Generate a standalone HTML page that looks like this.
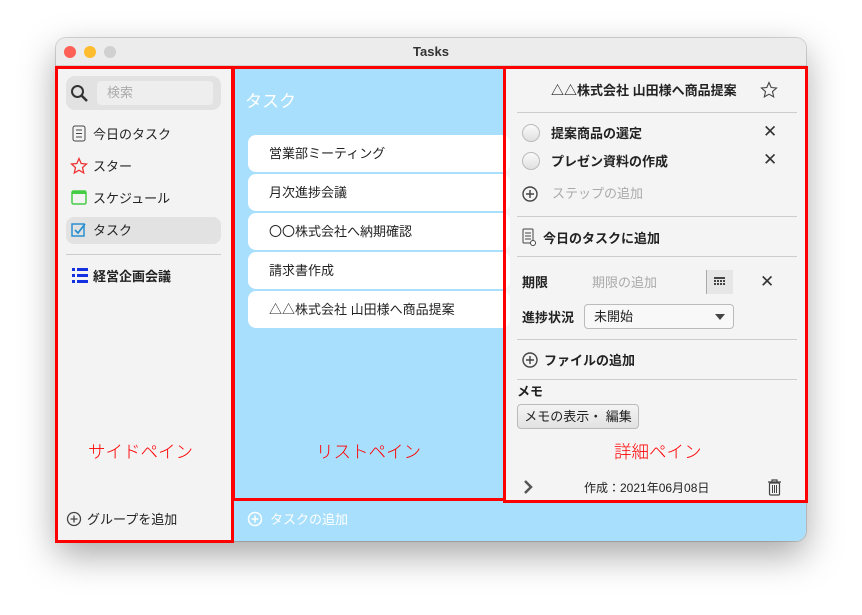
<!DOCTYPE html>
<html><head><meta charset="utf-8"><style>
*{margin:0;padding:0;box-sizing:border-box}
body{width:862px;height:615px;background:#fff;font-family:"Liberation Sans","Noto Sans CJK JP",sans-serif;position:relative;overflow:hidden;font-size:13px;color:#222}
.a{position:absolute}
.win{left:56px;top:38px;width:750px;height:503px;border-radius:10px;overflow:hidden;box-shadow:0 14px 36px rgba(0,0,0,.35),0 0 0 1px rgba(0,0,0,.15);background:#f4f4f4}
.rb{border:3px solid #f00}
.hr{height:1px;background:#ccc}
.item{left:248px;width:262px;height:37px;background:#fff;border-radius:8px;padding-left:21px;line-height:37px;font-size:13px;color:#222}
.circ{width:18px;height:18px;border-radius:50%;border:1px solid #bbb;background:linear-gradient(#fafafa,#e0e0e0)}
.x{font-size:17px;color:#333}
.lab{color:#f00;font-size:17.5px;font-weight:300}
</style></head><body>
<div class="a win">
  <div class="a" style="left:0;top:0;width:750px;height:28px;background:#ececec;border-bottom:1px solid #d0d0d0;text-align:center;line-height:28px;font-size:13px;font-weight:bold;color:#333">Tasks</div>
  <div class="a" style="left:8px;top:8px;width:12px;height:12px;border-radius:50%;background:#fe5f57"></div>
  <div class="a" style="left:28px;top:8px;width:12px;height:12px;border-radius:50%;background:#febc2e"></div>
  <div class="a" style="left:48px;top:8px;width:12px;height:12px;border-radius:50%;background:#d0d0d0"></div>
</div>
<div class="a" style="left:56px;top:67px;width:177px;height:474px;background:#f3f3f3"></div>
<div class="a" style="left:233px;top:67px;width:273px;height:474px;background:#a8dffc"></div>
<div class="a" style="left:233px;top:500px;width:573px;height:41px;background:#a8dffc;border-bottom-right-radius:10px"></div>
<div class="a" style="left:505px;top:67px;width:301px;height:434px;background:#f4f4f4"></div>

<div class="a" style="left:66px;top:76px;width:155px;height:34px;background:#e2e2e2;border-radius:9px"></div>
<svg class="a" style="left:70px;top:84px" width="20" height="20"><circle cx="7.5" cy="7.5" r="5.5" fill="none" stroke="#333" stroke-width="2"/><line x1="11.5" y1="11.5" x2="17" y2="17" stroke="#333" stroke-width="2.5"/></svg>
<div class="a" style="left:97px;top:81px;width:116px;height:24px;background:#eee;border-radius:4px;color:#aaa;padding-left:10px;line-height:24px">検索</div>
<svg class="a" style="left:72px;top:125px" width="14" height="17"><rect x="1" y="1" width="12" height="15" rx="2" fill="none" stroke="#444"/><path d="M4 5h6M4 8.5h6M4 12h6" stroke="#444"/></svg>
<div class="a" style="left:93px;top:124px">今日のタスク</div>
<svg class="a" style="left:70px;top:157px" width="18" height="18"><path d="M9 1.5l2.2 5 5.3.5-4 3.6 1.2 5.3L9 13.2l-4.7 2.7 1.2-5.3-4-3.6 5.3-.5z" fill="none" stroke="#e33" stroke-width="1.3"/></svg>
<div class="a" style="left:93px;top:156px">スター</div>
<svg class="a" style="left:71px;top:188px" width="16" height="17"><rect x="1" y="3" width="14" height="13" rx="1.5" fill="none" stroke="#4c4" stroke-width="1.5"/><rect x="1" y="3" width="14" height="3" fill="#4c4"/></svg>
<div class="a" style="left:93px;top:188px">スケジュール</div>
<div class="a" style="left:66px;top:217px;width:155px;height:27px;background:#e2e2e2;border-radius:8px"></div>
<svg class="a" style="left:71px;top:222px" width="16" height="16"><rect x="1" y="2" width="12" height="12" fill="none" stroke="#2a8fd0" stroke-width="1.5"/><path d="M4 8l3 3 7-9" fill="none" stroke="#2a8fd0" stroke-width="1.8"/></svg>
<div class="a" style="left:93px;top:220px">タスク</div>
<div class="a hr" style="left:66px;top:254px;width:155px"></div>
<svg class="a" style="left:72px;top:268px" width="16" height="15" fill="#1530e0"><rect x="0" y="0" width="3" height="3"/><rect x="5" y="0" width="11" height="3"/><rect x="0" y="6" width="3" height="3"/><rect x="5" y="6" width="11" height="3"/><rect x="0" y="12" width="3" height="3"/><rect x="5" y="12" width="11" height="3"/></svg>
<div class="a" style="left:93px;top:266px;font-weight:bold">経営企画会議</div>
<div class="a lab" style="left:88px;top:439px">サイドペイン</div>
<svg class="a" style="left:66px;top:511px" width="16" height="16"><circle cx="8" cy="8" r="6.5" fill="none" stroke="#444" stroke-width="1.3"/><path d="M8 4.5v7M4.5 8h7" stroke="#444" stroke-width="1.3"/></svg>
<div class="a" style="left:87px;top:509px">グループを追加</div>

<div class="a" style="left:245px;top:87px;color:#fff;font-size:17px">タスク</div>
<div class="a item" style="top:135px">営業部ミーティング</div>
<div class="a item" style="top:174px">月次進捗会議</div>
<div class="a item" style="top:213px">〇〇株式会社へ納期確認</div>
<div class="a item" style="top:252px">請求書作成</div>
<div class="a item" style="top:291px">△△株式会社 山田様へ商品提案</div>
<div class="a lab" style="left:316px;top:439px">リストペイン</div>
<svg class="a" style="left:247px;top:511px" width="16" height="16"><circle cx="8" cy="8" r="6.5" fill="none" stroke="#fff" stroke-width="1.5"/><path d="M8 4.5v7M4.5 8h7" stroke="#fff" stroke-width="1.5"/></svg>
<div class="a" style="left:270px;top:509px;color:#fff">タスクの追加</div>

<div class="a" style="left:551px;top:80px;font-weight:bold;font-size:13px">△△株式会社 山田様へ商品提案</div>
<svg class="a" style="left:760px;top:81px" width="18" height="18"><path d="M9 1.5l2.2 5 5.3.5-4 3.6 1.2 5.3L9 13.2l-4.7 2.7 1.2-5.3-4-3.6 5.3-.5z" fill="none" stroke="#444" stroke-width="1.1"/></svg>
<div class="a hr" style="left:517px;top:112px;width:280px"></div>
<div class="a circ" style="left:522px;top:124px"></div>
<div class="a" style="left:551px;top:123px;font-weight:bold">提案商品の選定</div>
<div class="a x" style="left:763px;top:122px">✕</div>
<div class="a circ" style="left:522px;top:152px"></div>
<div class="a" style="left:551px;top:151px;font-weight:bold">プレゼン資料の作成</div>
<div class="a x" style="left:763px;top:150px">✕</div>
<svg class="a" style="left:521px;top:185px" width="18" height="18"><circle cx="9" cy="9" r="7" fill="none" stroke="#444" stroke-width="1.4"/><path d="M9 5v8M5 9h8" stroke="#444" stroke-width="1.4"/></svg>
<div class="a" style="left:552px;top:183px;color:#aaa">ステップの追加</div>
<div class="a hr" style="left:517px;top:216px;width:280px"></div>
<svg class="a" style="left:522px;top:228px" width="15" height="18"><rect x="1" y="1" width="10" height="14" rx="1" fill="none" stroke="#444"/><path d="M3 5h6M3 8h6M3 11h6" stroke="#444"/><circle cx="11" cy="15" r="2.5" fill="#fff" stroke="#444"/></svg>
<div class="a" style="left:543px;top:228px;font-weight:bold">今日のタスクに追加</div>
<div class="a hr" style="left:517px;top:256px;width:280px"></div>
<div class="a" style="left:522px;top:272px;font-weight:bold">期限</div>
<div class="a" style="left:592px;top:272px;color:#aaa">期限の追加</div>
<div class="a" style="left:706px;top:270px;width:27px;height:24px;background:#e6e6e6;border-left:1px solid #aaa"></div>
<svg class="a" style="left:714px;top:277px" width="11" height="9" fill="#444"><rect x="0" y="0" width="11" height="2"/><rect x="0" y="3" width="2" height="2"/><rect x="3" y="3" width="2" height="2"/><rect x="6" y="3" width="2" height="2"/><rect x="9" y="3" width="2" height="2"/><rect x="0" y="6" width="2" height="2"/><rect x="3" y="6" width="2" height="2"/><rect x="6" y="6" width="2" height="2"/><rect x="9" y="6" width="2" height="2"/></svg>
<div class="a x" style="left:760px;top:272px">✕</div>
<div class="a" style="left:522px;top:307px;font-weight:bold">進捗状況</div>
<div class="a" style="left:584px;top:304px;width:150px;height:25px;background:#f8f8f8;border:1px solid #bbb;border-radius:4px;padding-left:9px;line-height:23px">未開始</div>
<svg class="a" style="left:715px;top:314px" width="10" height="6"><path d="M0 0h10L5 6z" fill="#444"/></svg>
<div class="a hr" style="left:517px;top:339px;width:280px"></div>
<svg class="a" style="left:521px;top:351px" width="18" height="18"><circle cx="9" cy="9" r="7" fill="none" stroke="#444" stroke-width="1.4"/><path d="M9 5v8M5 9h8" stroke="#444" stroke-width="1.4"/></svg>
<div class="a" style="left:544px;top:350px;font-weight:bold">ファイルの追加</div>
<div class="a hr" style="left:517px;top:379px;width:280px"></div>
<div class="a" style="left:517px;top:381px;font-weight:bold">メモ</div>
<div class="a" style="left:517px;top:404px;width:122px;height:25px;background:linear-gradient(#f4f4f4,#e2e2e2);border:1px solid #bbb;border-radius:4px;text-align:center;line-height:23px">メモの表示・ 編集</div>
<div class="a lab" style="left:614px;top:439px">詳細ペイン</div>
<svg class="a" style="left:522px;top:478px" width="12" height="18"><path d="M3 3l6 6-6 6" fill="none" stroke="#555" stroke-width="2.5"/></svg>
<div class="a" style="left:584px;top:479px;font-size:12px">作成：2021年06月08日</div>
<svg class="a" style="left:767px;top:478px" width="15" height="18"><path d="M1 4h13M5 4V2h5v2" fill="none" stroke="#444" stroke-width="1.2"/><rect x="2.5" y="5" width="10" height="12" rx="1" fill="none" stroke="#444" stroke-width="1.2"/><path d="M5.5 7v8M7.5 7v8M9.5 7v8" stroke="#444"/></svg>

<div class="a rb" style="left:55px;top:66px;width:179px;height:477px"></div>
<div class="a rb" style="left:232px;top:66px;width:274px;height:435px"></div>
<div class="a rb" style="left:503px;top:66px;width:305px;height:437px"></div>
</body></html>
